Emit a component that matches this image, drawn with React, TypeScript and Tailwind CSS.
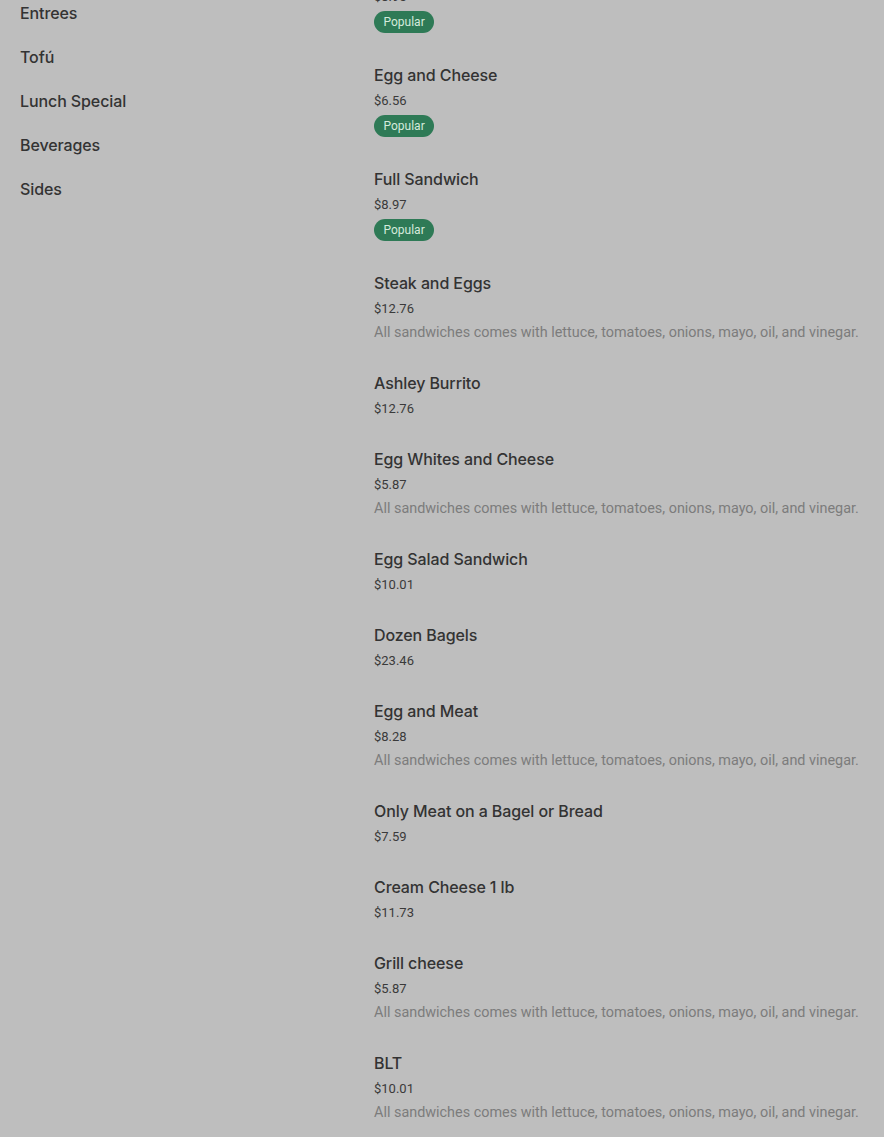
import React from "react";

type Item = { name: string; price: string; popular?: boolean; desc?: boolean };

const DESC = "All sandwiches comes with lettuce, tomatoes, onions, mayo, oil, and vinegar.";

const items: Item[] = [
  { name: "Bacon, Egg and Cheese", price: "$8.95", popular: true },
  { name: "Egg and Cheese", price: "$6.56", popular: true },
  { name: "Full Sandwich", price: "$8.97", popular: true },
  { name: "Steak and Eggs", price: "$12.76", desc: true },
  { name: "Ashley Burrito", price: "$12.76" },
  { name: "Egg Whites and Cheese", price: "$5.87", desc: true },
  { name: "Egg Salad Sandwich", price: "$10.01" },
  { name: "Dozen Bagels", price: "$23.46" },
  { name: "Egg and Meat", price: "$8.28", desc: true },
  { name: "Only Meat on a Bagel or Bread", price: "$7.59" },
  { name: "Cream Cheese 1 lb", price: "$11.73" },
  { name: "Grill cheese", price: "$5.87", desc: true },
  { name: "BLT", price: "$10.01", desc: true },
];

const nav = ["Breakfast", "Entrees", "Tofú", "Lunch Special", "Beverages", "Sides"];

export default function App() {
  return (
    <div
      className="w-[884px] h-[1137px] overflow-hidden bg-[#bebebe] flex"
      style={{ fontFamily: "Roboto, 'Liberation Sans', sans-serif" }}
    >
      <div className="w-[374px] shrink-0 pl-[20px] mt-[-53px] flex flex-col">
        {nav.map((n) => (
          <div
            key={n}
            className="h-[44px] flex items-center text-[16px] font-medium text-[#333333] font-['Inter',sans-serif] tracking-[-0.1px]"
          >
            {n}
          </div>
        ))}
      </div>
      <div className="flex-1 flex flex-col mt-[-54px]">
        {items.map((it) => (
          <div key={it.name} className="flex flex-col pt-[13px] pb-[13px]">
            <div className="h-[24px] leading-[24px] text-[16px] font-medium text-[#333333] font-['Inter',sans-serif] tracking-[-0.1px]">
              {it.name}
            </div>
            <div className="mt-[2px] h-[24px] leading-[24px] text-[13px] text-[#3a3a3a]">{it.price}</div>
            {it.desc && (
              <div className="h-[24px] leading-[24px] text-[14.4px] text-[#7c7c7c] whitespace-nowrap">{DESC}</div>
            )}
            {it.popular && (
              <div className="mt-[2px] mb-[4px] flex">
                <span className="h-[22px] px-[9.5px] rounded-full bg-[#2e7a56] text-[#d4eadc] text-[12px] leading-[22px]">
                  Popular
                </span>
              </div>
            )}
          </div>
        ))}
      </div>
    </div>
  );
}
